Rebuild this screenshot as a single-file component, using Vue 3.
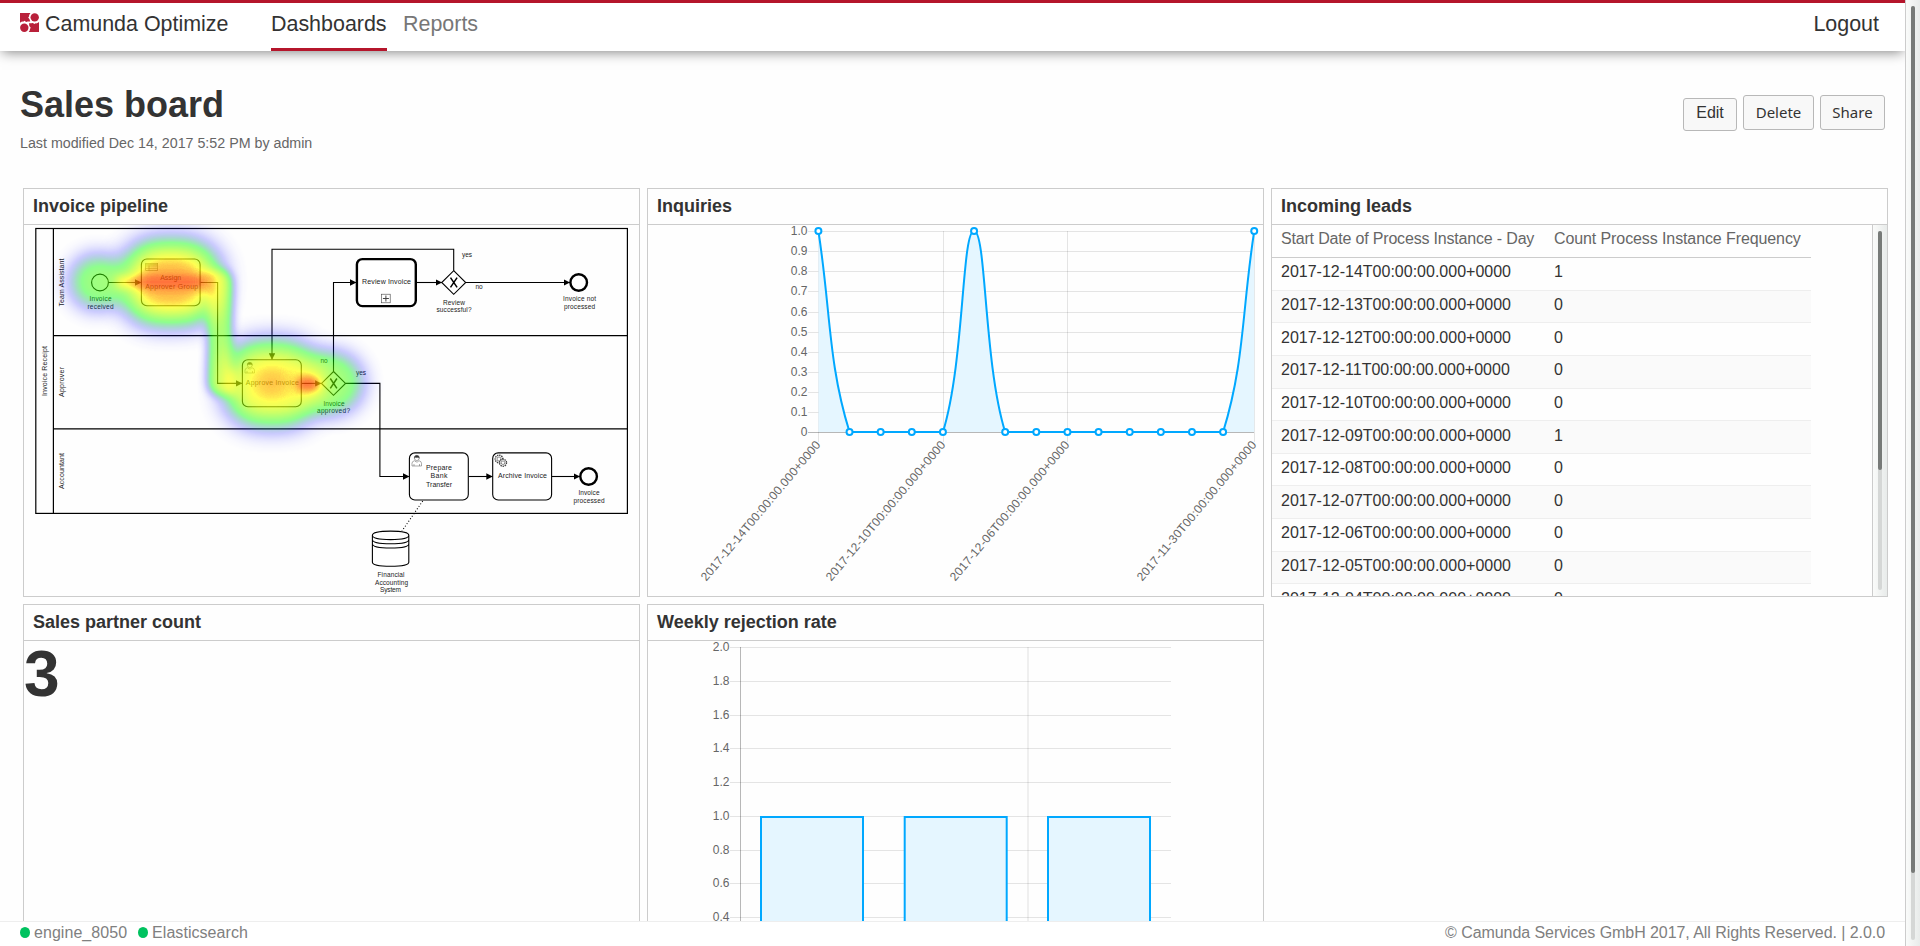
<script setup>
const rows = ['14', '13', '12', '11', '10', '09', '08', '07', '06', '05', '04'].map((d) => ({
  date: `2017-12-${d}T00:00:00.000+0000`,
  count: d === '14' || d === '09' ? 1 : 0
}))

// Line chart
const top = 231
const zero = 432
const values = [1, 0, 0, 0, 0, 1, 0, 0, 0, 0, 0, 0, 0, 0, 1]
const points = values.map((v, i) => ({ x: 818.4 + i * 31.13, y: v ? top : zero }))
const lineTicks = ['1.0', '0.9', '0.8', '0.7', '0.6', '0.5', '0.4', '0.3', '0.2', '0.1', '0'].map((t, i) => ({
  t,
  y: Math.round(231 + i * 20.13) + 0.5
}))
const dateTicks = [
  { i: 0, t: '2017-12-14T00:00:00.000+0000' },
  { i: 4, t: '2017-12-10T00:00:00.000+0000' },
  { i: 8, t: '2017-12-06T00:00:00.000+0000' },
  { i: 14, t: '2017-11-30T00:00:00.000+0000' }
].map((d) => ({ t: d.t, x: Math.round(points[d.i].x) + 0.5 }))

const clamp = (y) => Math.min(zero, Math.max(top, y))
const controls = points.map((p, i) => {
  const a = points[i - 1] || p
  const b = points[i + 1] || p
  const d1 = Math.hypot(p.x - a.x, p.y - a.y)
  const d2 = Math.hypot(b.x - p.x, b.y - p.y)
  const f1 = (0.4 * d1) / (d1 + d2)
  const f2 = (0.4 * d2) / (d1 + d2)
  return {
    in: [p.x - f1 * (b.x - a.x), clamp(p.y - f1 * (b.y - a.y))],
    out: [p.x + f2 * (b.x - a.x), clamp(p.y + f2 * (b.y - a.y))]
  }
})
const curve = points
  .map((p, i) => (i ? `C${controls[i - 1].out} ${controls[i].in} ${p.x},${p.y}` : `M${p.x},${p.y}`))
  .join(' ')
const area = `${curve} V${zero} H${points[0].x} Z`

// Bar chart
const barTicks = ['2.0', '1.8', '1.6', '1.4', '1.2', '1.0', '0.8', '0.6', '0.4', '0.2', '0'].map((t, i) => ({
  t,
  y: Math.round(647 + i * 33.75) + 0.5
}))
const bars = [761, 904.7, 1048]
</script>

<template>
  <div class="page">
    <div class="main">
      <header class="header">
        <svg class="logo" viewBox="0 0 19 19">
          <path d="M0 0h10.500q-2 2-1.400 3.600q-1.700.6-.3 1.600q1 .9 1.400 3.400H7.600q-1.600.8-2.400-.3q-.8-1-1.500.2Q1.800 8 0 9.800z" />
          <circle cx="14.700" cy="4.400" r="4.200" />
          <circle cx="4.300" cy="14.700" r="4.200" />
          <path d="M19 19H8.700q1.700-2 1.200-3.300q1.800-.8.200-1.800Q9 13 9 10.300h2.200q1.800-.9 2.500.3q.9 1 1.600-.3Q17.300 10.700 19 9z" />
        </svg>
        <span class="brand">Camunda Optimize</span>
        <nav class="nav">
          <a class="tab active">Dashboards</a>
          <a class="tab">Reports</a>
        </nav>
        <a class="logout">Logout</a>
      </header>

      <section class="title">
        <div>
          <h1>Sales board</h1>
          <p>Last modified Dec 14, 2017 5:52 PM by admin</p>
        </div>
        <div class="tools">
          <a class="btn edit">Edit</a>
          <button class="btn delete">Delete</button>
          <button class="btn share">Share</button>
        </div>
      </section>

      <section class="board">
        <article class="card">
          <h2>Invoice pipeline</h2>
          <svg class="canvas" viewBox="24 225 615 371">
            <defs>
              <filter id="heat" filterUnits="userSpaceOnUse" x="24" y="225" width="400" height="250" color-interpolation-filters="sRGB">
                <feColorMatrix type="matrix" values="0 0 0 1 0  0 0 0 1 0  0 0 0 1 0  0 0 0 1 0" />
                <feComponentTransfer>
                  <feFuncR type="table" tableValues="0 0 0 0 0 0 0 0 0 0 0 0 .17 .33 .5 .67 .83 1 1 1 1" />
                  <feFuncG type="table" tableValues="0 0 0 0 0 0 .17 .33 .5 .67 .83 1 1 1 1 1 1 1 .67 .33 0" />
                  <feFuncB type="table" tableValues="1 1 1 1 1 1 .83 .67 .5 .33 .17 0 0 0 0 0 0 0 0 0 0" />
                  <feFuncA type="linear" slope=".8" />
                </feComponentTransfer>
              </filter>
              <marker id="arrow" viewBox="0 0 6 6" refX="6" refY="3" markerWidth="6.4" markerHeight="6.4" markerUnits="userSpaceOnUse" orient="auto">
                <path d="M0 0L6 3L0 6z" />
              </marker>
              <g id="user">
                <path d="M1 11V8.200q0-1.800 2.500-2.500l1.500 1.200h1.500l1.500-1.200q2.500.7 2.500 2.500V11zM3 11V9M8.500 11V9" />
                <circle cx="5.800" cy="3.300" r="2.300" />
                <path class="solid" d="M3.300 3.200q-.2-2.900 2.500-2.900t2.500 2.900l-1.200-1q-1.300.8-2.600 0z" />
              </g>
            </defs>

            <g class="flow thick">
              <rect x="35.800" y="228.500" width="591.600" height="284.900" />
              <path d="M53.400 228.500V513.200M53.400 335.700H627.400M53.400 428.900H627.400" />
            </g>
            <g class="flow">
              <path marker-end="url(#arrow)" d="M108.500 282.500H141.300" />
              <path marker-end="url(#arrow)" d="M200.300 282.500H217.600V383.400H242.300" />
              <path marker-end="url(#arrow)" d="M301.500 383.400H321.500" />
              <path marker-end="url(#arrow)" d="M333.500 371.500V282.500H356.300" />
              <path marker-end="url(#arrow)" d="M416.500 282.500H442" />
              <path marker-end="url(#arrow)" d="M465.500 282.500H570" />
              <path marker-end="url(#arrow)" d="M453.700 270.700V249.200H272V359.700" />
              <path marker-end="url(#arrow)" d="M345.500 383.400H379.900V476.500H409.300" />
              <path marker-end="url(#arrow)" d="M468.500 476.500H492.700" />
              <path marker-end="url(#arrow)" d="M551.700 476.500H580" />
              <path stroke-dasharray="1 2" d="M422.700 501L402 531" />
            </g>
            <g class="shape">
              <circle cx="100" cy="282.500" r="8.400" />
              <rect x="141.400" y="259" width="58.700" height="46.800" rx="5.500" />
              <rect x="242.400" y="359.800" width="58.900" height="47" rx="5.500" />
              <rect class="heavy" x="356.900" y="259.100" width="58.900" height="47" rx="5.500" />
              <rect x="409.400" y="452.900" width="58.900" height="47.100" rx="5.500" />
              <rect x="492.700" y="452.900" width="58.900" height="47.100" rx="5.500" />
              <path d="M333.500 371.500l12 11.900l-12 11.900l-12-11.900zM453.700 270.700l12 11.800l-12 11.800l-12-11.800z" />
              <circle class="heavy" cx="578.700" cy="282.500" r="8.300" />
              <circle class="heavy" cx="588.600" cy="476.500" r="8.300" />
              <path d="M372.400 535.300v27q0 4 18.200 4t18.200-4v-27q0-4.200-18.200-4.200t-18.200 4.200q0 4.300 18.200 4.300t18.200-4.300M372.400 539.500q0 4.300 18.200 4.300t18.200-4.300M372.400 543.700q0 4.300 18.200 4.300t18.200-4.300" />
            </g>
            <path class="cross" d="M330.300 378.500l6.600 9.800m0-9.800l-6.600 9.800M450.500 277.600l6.600 9.800m0-9.800l-6.600 9.800" />
            <g class="icon">
              <rect x="381.600" y="294.200" width="8.600" height="8.600" />
              <path stroke-width="1" d="M385.900 295.500v6M382.900 298.500h6" />
              <rect x="145.700" y="263.500" width="12" height="7" />
              <path d="M145.700 264.700h12M145.700 266h12M145.700 268.300h12M149 265.500v5" />
              <use href="#user" x="244" y="362" />
              <use href="#user" x="411" y="455" />
              <g class="gear">
                <circle cx="499" cy="459" r="3.800" />
                <circle cx="503" cy="462.700" r="3.500" />
              </g>
              <circle cx="499" cy="459" r="2" />
              <circle cx="503" cy="462.700" r="1.800" />
            </g>
            <g class="label task">
              <text x="170.700" y="280">Assign</text>
              <text x="171.700" y="289" textLength="53">Approver Group</text>
              <text x="272.300" y="385" textLength="53">Approve Invoice</text>
              <text x="386.500" y="284" textLength="49">Review Invoice</text>
              <text x="439" y="470" textLength="26">Prepare</text>
              <text x="439" y="478" textLength="17">Bank</text>
              <text x="439" y="487" textLength="26">Transfer</text>
              <text x="522.500" y="478" textLength="49">Archive Invoice</text>
              <text transform="translate(64 282.500) rotate(-90)" textLength="48">Team Assistant</text>
              <text transform="translate(47 371) rotate(-90)" textLength="50">Invoice Receipt</text>
              <text transform="translate(64 382) rotate(-90)" textLength="30">Approver</text>
              <text transform="translate(64 471) rotate(-90)" textLength="36">Accountant</text>
            </g>
            <g class="label">
              <text x="100.500" y="301" textLength="22">Invoice</text>
              <text x="100.500" y="309" textLength="26">received</text>
              <text x="324" y="363">no</text>
              <text x="361" y="375">yes</text>
              <text x="334" y="406" textLength="21">Invoice</text>
              <text x="333.500" y="413" textLength="33">approved?</text>
              <text x="467" y="257">yes</text>
              <text x="479" y="289">no</text>
              <text x="454" y="305" textLength="22">Review</text>
              <text x="454" y="312" textLength="35">successful?</text>
              <text x="579.500" y="301" textLength="33">Invoice not</text>
              <text x="579.500" y="309" textLength="31">processed</text>
              <text x="589" y="495" textLength="21">Invoice</text>
              <text x="589" y="503" textLength="31">processed</text>
              <text x="391" y="577" textLength="27">Financial</text>
              <text x="391.500" y="585" textLength="33">Accounting</text>
              <text x="390.500" y="592" textLength="21">System</text>
            </g>
            <g filter="url(#heat)">
              <rect class="b12" x="119" y="238" width="104" height="89" rx="38" opacity=".86" />
              <ellipse class="b8" cx="170" cy="282" rx="31" ry="24" opacity=".36" />
              <circle class="b10" cx="97" cy="282" r="29" opacity=".62" />
              <path class="b4 band" d="M116 282H206" stroke-width="13" opacity=".6" />
              <path class="b5 band" d="M204 282H220V383H236" stroke-width="25" opacity=".66" />
              <rect class="b12" x="222" y="339" width="100" height="89" rx="38" opacity=".83" />
              <ellipse class="b8" cx="272" cy="383" rx="20" ry="17" opacity=".4" />
              <ellipse class="b4" cx="309" cy="384" rx="13" ry="8" opacity=".7" />
              <circle class="b10" cx="332" cy="383" r="33" opacity=".64" />
            </g>
          </svg>
        </article>

        <article class="card">
          <h2>Inquiries</h2>
          <svg class="canvas chart" viewBox="648 225 615 371">
            <g class="grid">
              <path v-for="t in lineTicks" :key="t.t" :class="{ base: t.t === '0' }" :d="`M808 ${t.y}H1254`" />
              <path v-for="t in dateTicks" :key="t.t" :d="`M${t.x} 231V442`" />
            </g>
            <text v-for="t in lineTicks" :key="t.t" x="807.500" :y="t.y + 3">{{ t.t }}</text>
            <text v-for="t in dateTicks" :key="t.t" textLength="178.500" :transform="`translate(${t.x - 0.5} 442.500) rotate(-50)`" y="4">{{ t.t }}</text>
            <path class="area" :d="area" />
            <path class="line" :d="curve" />
            <circle v-for="(p, i) in points" :key="i" class="dot" :cx="p.x" :cy="p.y" r="3" />
          </svg>
        </article>

        <article class="card">
          <h2>Incoming leads</h2>
          <div class="scroller">
            <div class="content">
              <table>
                <thead>
                  <tr><th class="narrow">Start Date of Process Instance - Day</th><th>Count Process Instance Frequency</th></tr>
                </thead>
                <tbody>
                  <tr v-for="r in rows" :key="r.date"><td>{{ r.date }}</td><td>{{ r.count }}</td></tr>
                </tbody>
              </table>
            </div>
            <div class="scrollbar"><div class="track"><div class="thumb inner"></div></div></div>
          </div>
        </article>

        <article class="card">
          <h2>Sales partner count</h2>
          <div class="number">3</div>
        </article>

        <article class="card">
          <h2>Weekly rejection rate</h2>
          <svg class="canvas chart" viewBox="648 641 615 371">
            <g class="grid">
              <path v-for="t in barTicks" :key="t.t" :d="`M730 ${t.y}H1171`" />
              <path class="base" d="M740.500 647V985" />
              <path class="wide" d="M1028 647V985" />
            </g>
            <text v-for="t in barTicks" :key="t.t" x="729.500" :y="t.y + 3">{{ t.t }}</text>
            <path v-for="x in bars" :key="x" class="bar" :d="`M${x} 985V817H${x + 102}V985`" />
          </svg>
        </article>
      </section>

      <footer class="footer">
        <span class="status"><i></i>engine_8050</span>
        <span class="status"><i></i>Elasticsearch</span>
        <span class="copy">© Camunda Services GmbH 2017, All Rights Reserved. | 2.0.0</span>
      </footer>
    </div>
    <div class="scrollbar"><div class="track"><div class="thumb outer"></div></div></div>
  </div>
</template>

<style>
body {
  overflow: hidden;
}
</style>

<style scoped>
* {
  box-sizing: border-box;
}
.page {
  display: flex;
  width: 1920px;
  height: 946px;
  overflow: hidden;
  background: #fefefe;
  color: #333;
  font: 16px/20px "Liberation Sans", Arial, sans-serif;
}
.main {
  display: flex;
  flex-direction: column;
  width: 1905px;
  height: 946px;
  overflow: hidden;
}
.header {
  display: flex;
  flex: none;
  height: 51px;
  padding: 0 26px 0 20px;
  border-top: 3px solid #b5152b;
  background: #fff;
  box-shadow: 0 3px 12px -2px rgba(0, 0, 0, 0.5);
  font-size: 21.45px;
  line-height: 42px;
}
.logo {
  width: 19px;
  height: 19px;
  margin-top: 10px;
  fill: #b9203a;
}
.brand {
  width: 226px;
  margin-left: 6px;
}
.nav {
  display: flex;
  gap: 16px;
}
.tab {
  height: 48px;
  color: #777;
}
.tab.active {
  width: 116px;
  border-bottom: 3px solid #b5152b;
  color: #333;
}
.logout {
  margin-left: auto;
}
.title {
  display: flex;
  flex: none;
  justify-content: space-between;
  height: 137px;
  padding: 0 20px;
}
h1 {
  margin: 33px 0 0;
  font-size: 36px;
  line-height: 42px;
}
p {
  margin: 8px 0 0;
  color: #666;
  font-size: 14.25px;
  line-height: 18px;
}
.tools {
  display: flex;
  align-items: flex-start;
  gap: 6px;
  padding-top: 44px;
}
.btn {
  height: 35px;
  padding: 0;
  border: 1px solid #b8b8b8;
  border-radius: 3px;
  background: #f8f8f8;
  color: #333;
  font: 15px/33px "Noto Sans", sans-serif;
  text-align: center;
}
.btn.edit {
  width: 54px;
  height: 33px;
  margin-top: 3px;
  font: 16px/28px "Liberation Sans", Arial, sans-serif;
}
.btn.delete {
  width: 71px;
}
.btn.share {
  width: 65px;
}
.board {
  display: grid;
  flex: 1;
  grid-template-columns: repeat(3, 617px);
  grid-auto-rows: 409px;
  gap: 7px;
  min-height: 0;
  padding-left: 23px;
  overflow: hidden;
}
.card {
  display: flex;
  flex-direction: column;
  border: 1px solid #ccc;
  overflow: hidden;
}
h2 {
  flex: none;
  height: 36px;
  margin: 0;
  padding-left: 9px;
  border-bottom: 1px solid #ccc;
  font-size: 18px;
  line-height: 34px;
}
.canvas {
  display: block;
  width: 615px;
  height: 371px;
}
.number {
  font-size: 64px;
  font-weight: bold;
  line-height: 66px;
}
.flow,
.shape {
  fill: none;
  stroke: #000;
  stroke-width: 1.1;
}
.flow.thick {
  stroke-width: 1.2;
}
.flow marker path {
  fill: #000;
  stroke: none;
}
.shape > * {
  fill: #fff;
}
.shape .heavy {
  stroke-width: 2.4;
}
.cross {
  fill: none;
  stroke: #000;
  stroke-width: 1.5;
}
.icon {
  fill: none;
  stroke: #444;
  stroke-width: 0.6;
}
#user {
  fill: #fff;
  stroke: #555;
  stroke-width: 0.5;
}
#user .solid {
  fill: #333;
}
.gear {
  fill: #fff;
  stroke-width: 1.4;
  stroke-dasharray: 1.4 0.8;
}
.label {
  fill: #222;
  font-size: 6.5px;
  text-anchor: middle;
}
.label.task {
  font-size: 7px;
}
.b4 {
  filter: blur(4px);
}
.b5 {
  filter: blur(5px);
}
.b8 {
  filter: blur(8px);
}
.b10 {
  filter: blur(10px);
}
.b12 {
  filter: blur(12px);
}
.band {
  fill: none;
  stroke: #000;
  stroke-linejoin: round;
}
.chart text {
  fill: #666;
  font-size: 12px;
  text-anchor: end;
}
.grid {
  fill: none;
  stroke: rgba(0, 0, 0, 0.1);
}
.grid .base {
  stroke: rgba(0, 0, 0, 0.28);
}
.grid .wide {
  stroke: rgba(0, 0, 0, 0.06);
  stroke-width: 2;
}
.area {
  fill: #e5f6ff;
}
.line {
  fill: none;
  stroke: #00a8ff;
  stroke-width: 2;
}
.dot {
  fill: #fff;
  stroke: #00a8ff;
  stroke-width: 2;
}
.bar {
  fill: #e5f6ff;
  stroke: #00a8ff;
  stroke-width: 2;
}
.scroller {
  display: flex;
  height: 371px;
}
.content {
  width: 600px;
  overflow: hidden;
}
table {
  width: 539px;
  border-collapse: separate;
  border-spacing: 0;
  table-layout: fixed;
}
th,
td {
  height: 32.65px;
  padding: 0 0 3px 9px;
  border-bottom: 1px solid #eee;
  line-height: 18px;
  text-align: left;
  white-space: nowrap;
}
th:first-child {
  width: 273px;
}
th {
  height: 33px;
  padding-bottom: 5px;
  border-color: #ccc;
  color: #666;
  font-weight: normal;
  letter-spacing: -0.1px;
}
th.narrow {
  letter-spacing: -0.18px;
}
tbody tr:nth-child(even) {
  background: #fafafa;
}
.scrollbar {
  flex: none;
  width: 15px;
  padding: 6px 4px 6px 5px;
  border-left: 1px solid #ccc;
  background: linear-gradient(90deg, #fafbfa, #e8ebea);
}
.track {
  width: 4px;
  height: 100%;
  border-radius: 2px;
  background: #d5d7d6;
}
.thumb {
  width: 4px;
  border-radius: 2px;
  background: #777a78;
}
.thumb.inner {
  height: 239px;
}
.thumb.outer {
  height: 867px;
}
.footer {
  display: flex;
  flex: none;
  height: 25px;
  padding: 0 20px;
  border-top: 1px solid #eee;
  background: #fff;
  color: #808080;
  line-height: 22px;
}
.status {
  margin-right: 11px;
  letter-spacing: 0.05px;
}
.status i {
  display: inline-block;
  width: 10px;
  height: 11px;
  margin-right: 4px;
  border-radius: 50%;
  background: #00c25f;
}
.copy {
  margin-left: auto;
  letter-spacing: -0.065px;
}
</style>
